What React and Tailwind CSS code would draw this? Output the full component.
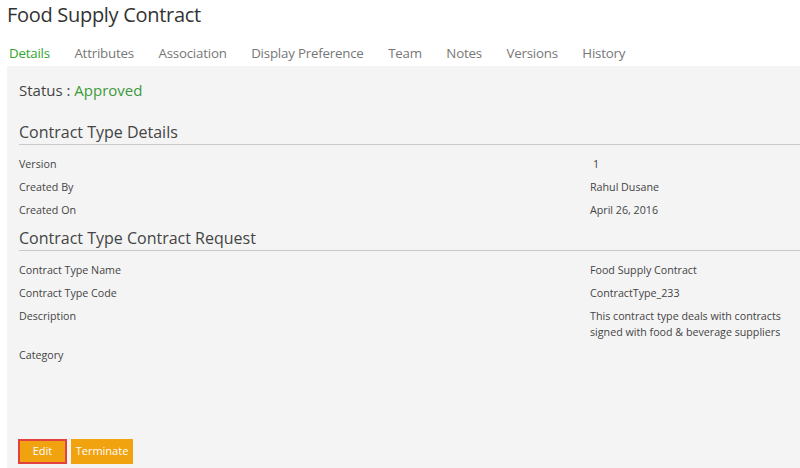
const tabs = ['Details', 'Attributes', 'Association', 'Display Preference', 'Team', 'Notes', 'Versions', 'History'];

function Row({ label, value }) {
  return (
    <div className="flex text-[10.7px] text-[#444] leading-[16px]">
      <div className="w-[571px] shrink-0">{label}</div>
      <div className="w-[200px]">{value}</div>
    </div>
  );
}

function Section({ title }) {
  return (
    <div className="border-b border-[#c9c9c9] pb-[2px] text-[16px] text-[#444] leading-[20px]">{title}</div>
  );
}

export default function App() {
  return (
    <div className="w-[800px] h-[468px] bg-white flex flex-col overflow-hidden" style={{ fontFamily: '"Open Sans", "Noto Sans", sans-serif' }}>
      <h1 className="pl-[7px] pt-[1px] text-[20px] leading-[28px] text-[#333] tracking-[-0.3px]">Food Supply Contract</h1>
      <div className="flex gap-[24.5px] pl-[9px] mt-[11px] h-[26px] text-[13.3px] leading-[26px] tracking-[-0.2px] text-[#777]">
        {tabs.map((t, i) => (
          <span key={t} className={i === 0 ? 'text-[#2fa52f]' : ''}>{t}</span>
        ))}
      </div>
      <div className="flex-1 ml-[7px] bg-[#f4f4f4] pl-[12px] flex flex-col">
        <div className="mt-[13px] text-[15px] leading-[22px] text-[#444]">
          Status : <span className="text-[#3c9a3c]">Approved</span>
        </div>
        <div className="mt-[21px]">
          <Section title="Contract Type Details" />
        </div>
        <div className="flex flex-col gap-[7px] mt-[11px]">
          <Row label="Version" value={<span className="pl-[3px]">1</span>} />
          <Row label="Created By" value="Rahul Dusane" />
          <Row label="Created On" value="April 26, 2016" />
        </div>
        <div className="mt-[10px]">
          <Section title="Contract Type Contract Request" />
        </div>
        <div className="flex flex-col gap-[7px] mt-[11px]">
          <Row label="Contract Type Name" value="Food Supply Contract" />
          <Row label="Contract Type Code" value="ContractType_233" />
          <Row label="Description" value="This contract type deals with contracts signed with food & beverage suppliers" />
          <Row label="Category" value="" />
        </div>
        <div className="mt-auto mb-[4px] -ml-[1px] flex gap-[4px] text-[11px] text-white">
          <button className="w-[49px] h-[25px] bg-[#f0a20f] border-2 border-[#e2413f]">Edit</button>
          <button className="w-[62px] h-[25px] bg-[#f0a20f]">Terminate</button>
        </div>
      </div>
    </div>
  );
}
